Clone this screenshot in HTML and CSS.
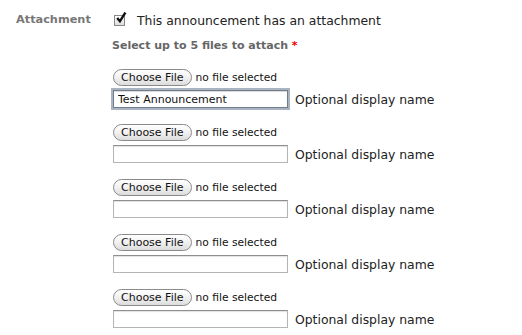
FILE: index.html
```html
<!DOCTYPE html>
<html lang="en">
<head>
    <meta charset="UTF-8">
    <title>Announcement attachment</title>
    <link rel="stylesheet" href="styles.css">
</head>
<body>
    <div class="field">
        <div class="field-label">Attachment</div>
        <div class="field-body">
            <label class="check">
                <span class="checkbox"><svg viewBox="0 0 11 11" width="12" height="12"><path d="M2 5.5 L4.5 8.5 L9.5 0.5" fill="none" stroke="#111" stroke-width="2.2"/></svg></span>
                This announcement has an attachment
            </label>
            <div class="sub-label">Select up to 5 files to attach <span class="req">*</span></div>
            <div class="files">
                <div class="file-item">
                    <div class="file-row"><button class="choose">Choose File</button><span class="none">no file selected</span></div>
                    <div class="name-row"><input type="text" class="name focus" value="Test Announcement"><span class="hint">Optional display name</span></div>
                </div>
                <div class="file-item">
                    <div class="file-row"><button class="choose">Choose File</button><span class="none">no file selected</span></div>
                    <div class="name-row"><input type="text" class="name"><span class="hint">Optional display name</span></div>
                </div>
                <div class="file-item">
                    <div class="file-row"><button class="choose">Choose File</button><span class="none">no file selected</span></div>
                    <div class="name-row"><input type="text" class="name"><span class="hint">Optional display name</span></div>
                </div>
                <div class="file-item">
                    <div class="file-row"><button class="choose">Choose File</button><span class="none">no file selected</span></div>
                    <div class="name-row"><input type="text" class="name"><span class="hint">Optional display name</span></div>
                </div>
                <div class="file-item">
                    <div class="file-row"><button class="choose">Choose File</button><span class="none">no file selected</span></div>
                    <div class="name-row"><input type="text" class="name"><span class="hint">Optional display name</span></div>
                </div>
            </div>
        </div>
    </div>
</body>
</html>
```

FILE: styles.css
```css
/* Base */
*{margin:0;padding:0;box-sizing:border-box}
body{font-family:'DejaVu Sans',Verdana,sans-serif;background:#fff;color:#222;padding:10px 0 0 16px}
/* Field row */
.field{display:flex;align-items:flex-start}
.field-label{width:97px;font-size:11.3px;font-weight:bold;color:#777;padding-top:3px}
.field-body{display:flex;flex-direction:column}
.check{display:flex;align-items:center;gap:12px;font-size:12.4px;color:#222;height:20px}
.checkbox{width:11px;height:11px;border:1px solid #888;background:linear-gradient(#fff,#ddd);display:flex;align-items:center;justify-content:center;margin-left:1px}
.checkbox svg{margin-top:-4px;margin-left:2px;flex:none}
.sub-label{font-size:11px;font-weight:bold;color:#666;margin:9px 0 0 -1px}
.req{color:#e00}
/* File list */
.files{display:flex;flex-direction:column;gap:16px;margin-top:17px}
.file-item{display:flex;flex-direction:column;gap:4px}
.file-row{display:flex;align-items:center;gap:4px;height:17px}
.choose{font-family:inherit;font-size:11px;color:#111;height:17px;padding:0 7px;border:1px solid #8a8a8a;border-radius:9px;background:linear-gradient(#fff 0%,#f1f1f1 50%,#dcdcdc 100%)}
.none{font-size:10.7px;color:#111}
.name-row{display:flex;align-items:center;gap:7px}
.name{width:175px;height:18px;font-family:inherit;font-size:11px;color:#111;padding:0 4px;border:1px solid #b5b5b5;border-top-color:#8e8e8e;box-shadow:inset 0 1px 1px rgba(0,0,0,.12);outline:none}
.name.focus{border:1px solid #6f7d8c;box-shadow:0 0 0 2px #a9b4c0,inset 0 1px 1px rgba(0,0,0,.15)}
.hint{font-size:12.4px;color:#222}
```
